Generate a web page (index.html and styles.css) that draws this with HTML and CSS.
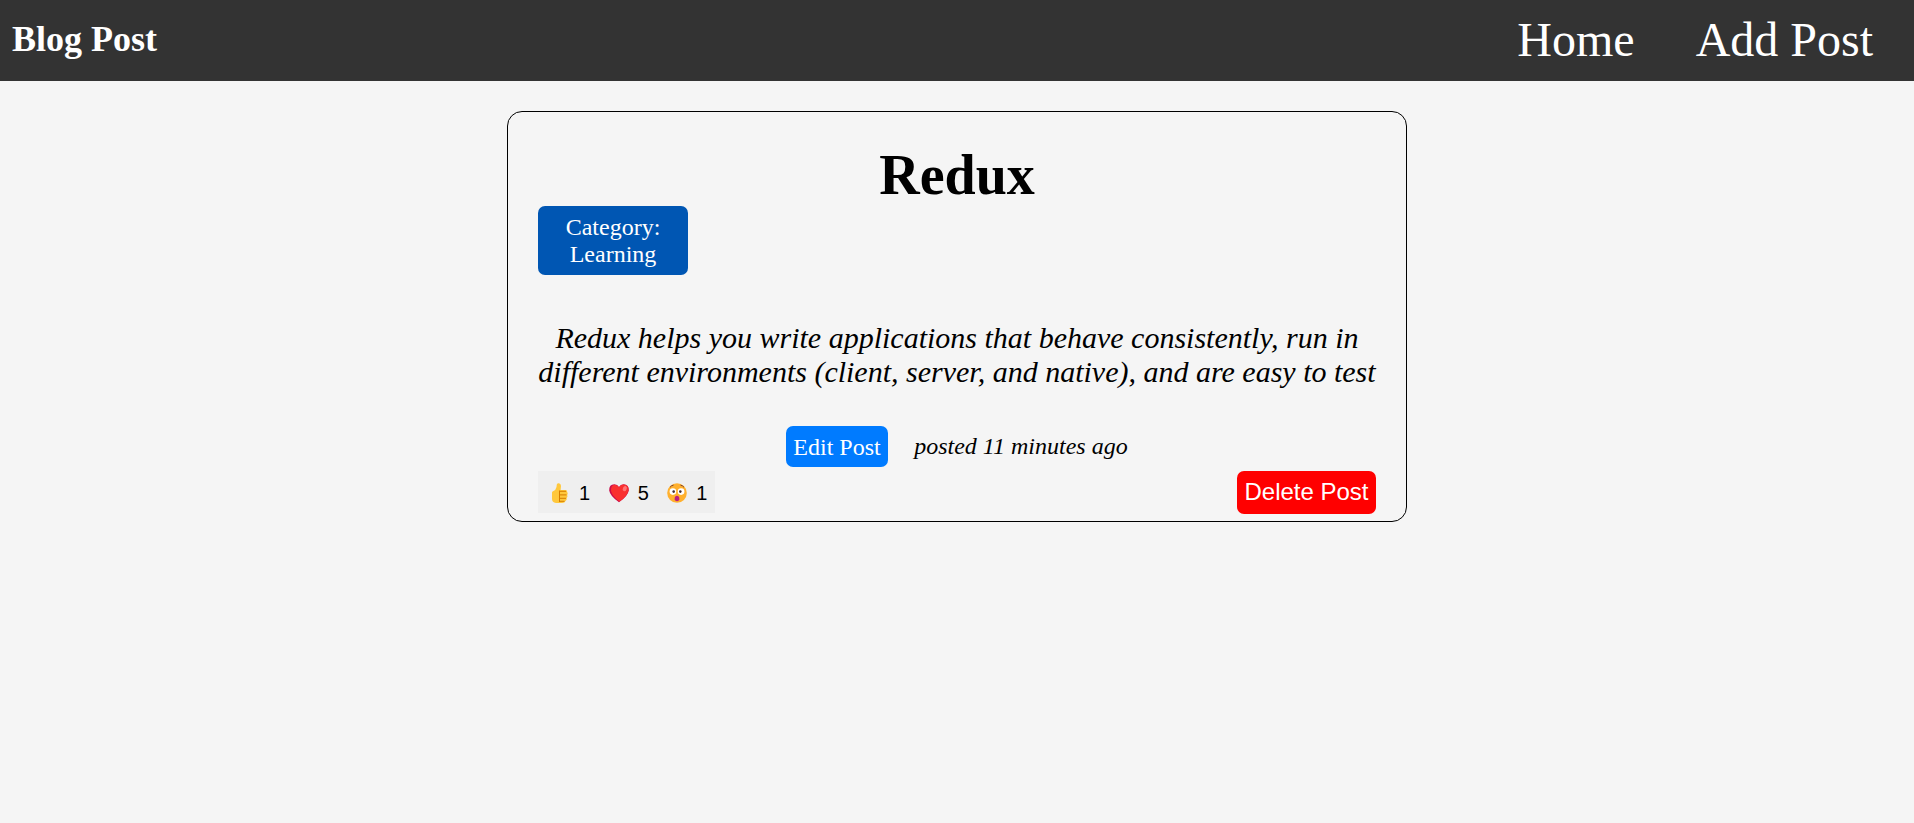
FILE: index.html
```html
<!DOCTYPE html>
<html lang="en">
<head>
<meta charset="utf-8">
<title>Blog Post</title>
<link rel="stylesheet" href="styles.css">
</head>
<body>
<header class="header">
  <h1 class="logo">Blog Post</h1>
  <nav class="nav">
    <a class="nav-link">Home</a>
    <a class="nav-link">Add Post</a>
  </nav>
</header>
<main class="main">
  <article class="post">
    <h2 class="title">Redux</h2>
    <p class="category">Category: Learning</p>
    <p class="content">Redux helps you write applications that behave consistently, run in<br>different environments (client, server, and native), and are easy to test</p>
    <div class="meta">
      <a class="edit">Edit Post</a>
      <i class="time">posted 11 minutes ago</i>
    </div>
    <div class="actions">
      <div class="reactions">
        <span class="reaction">
          <svg class="emoji" viewBox="0 0 20 20">
            <path d="M2 9.5 Q2 8.500 3 8.200 Q6 7 6.500 4 L6.800 1.500 Q7.300 0 9 .2 Q11 .6 11 3 L10.600 7 H15.500 Q17.400 7.200 17.200 9 Q18.300 10.500 17.200 12 Q18 13.800 16.700 15 Q17.200 17 15.500 18 Q14.800 20 12 19.900 H6 Q2 19.500 2 16 Z" fill="#ffc83d"/>
            <path d="M9.500 7.500 V19 M10 8.300 H16 M10 11.900 H16.500 M10 15.300 H16 M10 18.300 H14.500" fill="none" stroke="#d67d00" stroke-width="1"/>
          </svg>
          <span>1</span>
        </span>
        <span class="reaction">
          <svg class="emoji" viewBox="0 0 20 20">
            <path d="M10 19.300 Q1 13 .2 7.500 Q0 1.300 5.300 1.300 Q8.500 1.300 10 4 Q11.500 1.300 14.700 1.300 Q20 1.600 19.800 7.500 Q19 13 10 19.300 Z" fill="#ca0b4a"/>
            <path d="M10.500 18.600 Q3.500 13.500 2 8 Q1.500 2 5.800 1.700 Q8.700 1.700 10 4.600 Q11.500 1.600 14.700 1.600 Q19.700 1.800 19.500 7.200 Q18.500 13 10.500 18.600 Z" fill="#f92f2f"/>
            <ellipse cx="15.800" cy="5.600" rx="1.900" ry="2.700" transform="rotate(25 15.800 5.600)" fill="#ff7474"/>
          </svg>
          <span>5</span>
        </span>
        <span class="reaction">
          <svg class="emoji" viewBox="0 0 20 20">
            <circle cx="10" cy="10" r="9.800" fill="#ffb02e"/>
            <path d="M3 4.300 Q4.300 2.500 6.500 2.200 M13.500 2.200 Q15.700 2.500 17 4.300" fill="none" stroke="#7d4533" stroke-width="1"/>
            <circle cx="5.900" cy="8.600" r="3.300" fill="#fff"/>
            <circle cx="14.100" cy="8.600" r="3.300" fill="#fff"/>
            <circle cx="6.700" cy="8.600" r="1.300" fill="#402a32"/>
            <circle cx="13.300" cy="8.600" r="1.300" fill="#402a32"/>
            <path d="M7.700 14.800 Q8.200 12.800 10 12.800 Q11.800 12.800 12.300 14.800 V16.500 Q12 18.300 10 18.300 Q8 18.300 7.700 16.500 Z" fill="#bb1d80"/>
          </svg>
          <span>1</span>
        </span>
      </div>
      <button class="delete">Delete Post</button>
    </div>
  </article>
</main>
</body>
</html>
```
FILE: styles.css
```css
* { box-sizing: border-box; margin: 0; padding: 0; }
body {
  background: #f5f5f5;
  color: #000;
  font-family: "Liberation Serif", "Times New Roman", serif;
}
.header {
  display: flex;
  justify-content: space-between;
  align-items: center;
  height: 81px;
  padding: 0 41px 0 12px;
  background: #333;
  color: #fff;
}
.logo { font-size: 36px; line-height: 41px; padding-bottom: 2px; }
.nav { display: flex; gap: 61px; }
.nav-link { font-size: 48px; line-height: 55px; padding-bottom: 2px; }
.main { display: flex; justify-content: center; padding-top: 30px; }
.post {
  width: 900px;
  height: 411px;
  padding: 31px 30px 0;
  border: 1px solid #000;
  border-radius: 15px;
}
.title {
  height: 63px;
  font-size: 56px;
  line-height: 64px;
  text-align: center;
}
.category {
  width: 150px;
  height: 69px;
  padding: 8px 20px 7px;
  border-radius: 7px;
  background: #0056b3;
  color: #fff;
  font-size: 24px;
  line-height: 27px;
  text-align: center;
}
.content {
  margin-top: 46px;
  font-size: 30px;
  font-style: italic;
  line-height: 34px;
  text-align: center;
  white-space: nowrap;
}
.meta {
  display: flex;
  justify-content: center;
  align-items: center;
  gap: 26px;
  height: 41px;
  margin-top: 37px;
  font-size: 24px;
  line-height: 27px;
}
.edit {
  padding: 8px 7.500px 6px 7px;
  border-radius: 7px;
  background: #007bff;
  color: #fff;
}
.actions {
  display: flex;
  justify-content: space-between;
  align-items: flex-start;
  margin-top: 4px;
}
.reactions {
  display: flex;
  gap: 18.500px;
  width: 177px;
  height: 42px;
  padding-left: 12px;
  background: #efefef;
  font: 20px/44px "Liberation Sans", Arial, sans-serif;
}
.reaction { display: flex; align-items: center; gap: 9px; }
.reaction span { padding-top: 2px; }
.emoji { width: 20px; height: 20px; margin-top: 2px; }
.delete {
  width: 139px;
  height: 43px;
  padding: 0 7px 2px;
  border: 0;
  border-radius: 7px;
  background: #f00;
  color: #fff;
  font: 24px/41px "Liberation Sans", Arial, sans-serif;
  white-space: nowrap;
}
```
